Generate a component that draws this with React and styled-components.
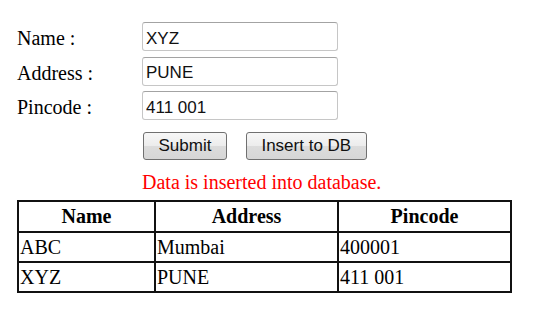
import { Fragment } from "react";
import styled, { createGlobalStyle } from "styled-components";

const GlobalStyle = createGlobalStyle`
  html, body {
    margin: 0;
    padding: 0;
    background: #fff;
  }
  body {
    font-family: "Liberation Serif", "Times New Roman", serif;
    color: #000;
  }
`;

const Page = styled.div`
  padding: 22px 0 0 17px;
`;

const Form = styled.div`
  display: grid;
  grid-template-columns: 125px 196px;
  row-gap: 5.5px;
`;

const Label = styled.label`
  font-size: 20px;
  line-height: 23px;
  padding-top: 5px;
`;

const Input = styled.input`
  box-sizing: border-box;
  width: 196px;
  height: 29px;
  margin: 0;
  padding: 4px 3px 0;
  border: 1px solid #c6c6c6;
  border-top-color: #a3a3a3;
  border-radius: 3px;
  font-family: "Liberation Sans", Arial, sans-serif;
  font-size: 17px;
  color: #111;
  background: #fff;
  outline: none;
`;

const Actions = styled.div`
  grid-column: 2;
  display: flex;
  gap: 19px;
  margin-top: 6.5px;
  padding-left: 1px;
  white-space: nowrap;
`;

const Button = styled.button`
  box-sizing: border-box;
  height: 28px;
  padding: 0 14.5px;
  border: 1px solid #707070;
  border-radius: 3px;
  background: linear-gradient(#f7f7f7, #ececec 50%, #dcdcdc 51%, #d6d6d6);
  font-family: "Liberation Sans", Arial, sans-serif;
  font-size: 17px;
  color: #111;
  cursor: pointer;
`;

const Message = styled.div`
  grid-column: 2;
  margin-top: 5.5px;
  white-space: nowrap;
  font-size: 20px;
  line-height: 23px;
  color: #ff0000;
`;

const Table = styled.table`
  margin-top: 6px;
  width: 493px;
  table-layout: fixed;
  border-collapse: collapse;
  border: 2px solid #111;
  font-size: 20px;
  line-height: 23px;

  th,
  td {
    border: 2px solid #111;
    padding: 0 1px;
    vertical-align: middle;
  }
  th {
    height: 29px;
    font-weight: bold;
    text-align: center;
  }
  td {
    height: 27px;
    text-align: left;
    padding-top: 1px;
  }
`;

const fields = [
  { label: "Name :", value: "XYZ" },
  { label: "Address :", value: "PUNE" },
  { label: "Pincode :", value: "411 001" },
];

const rows = [
  ["ABC", "Mumbai", "400001"],
  ["XYZ", "PUNE", "411 001"],
];

export default function App() {
  return (
    <>
      <GlobalStyle />
      <Page>
        <Form>
          {fields.map((f) => (
            <Fragment key={f.label}>
              <Label>{f.label}</Label>
              <Input defaultValue={f.value} />
            </Fragment>
          ))}
          <Actions>
            <Button>Submit</Button>
            <Button>Insert to DB</Button>
          </Actions>
          <Message>Data is inserted into database.</Message>
        </Form>
        <Table>
          <colgroup>
            <col style={{ width: 137 }} />
            <col style={{ width: 183 }} />
            <col style={{ width: 173 }} />
          </colgroup>
          <thead>
            <tr>
              <th>Name</th>
              <th>Address</th>
              <th>Pincode</th>
            </tr>
          </thead>
          <tbody>
            {rows.map((r) => (
              <tr key={r[0]}>
                {r.map((c) => (
                  <td key={c}>{c}</td>
                ))}
              </tr>
            ))}
          </tbody>
        </Table>
      </Page>
    </>
  );
}
